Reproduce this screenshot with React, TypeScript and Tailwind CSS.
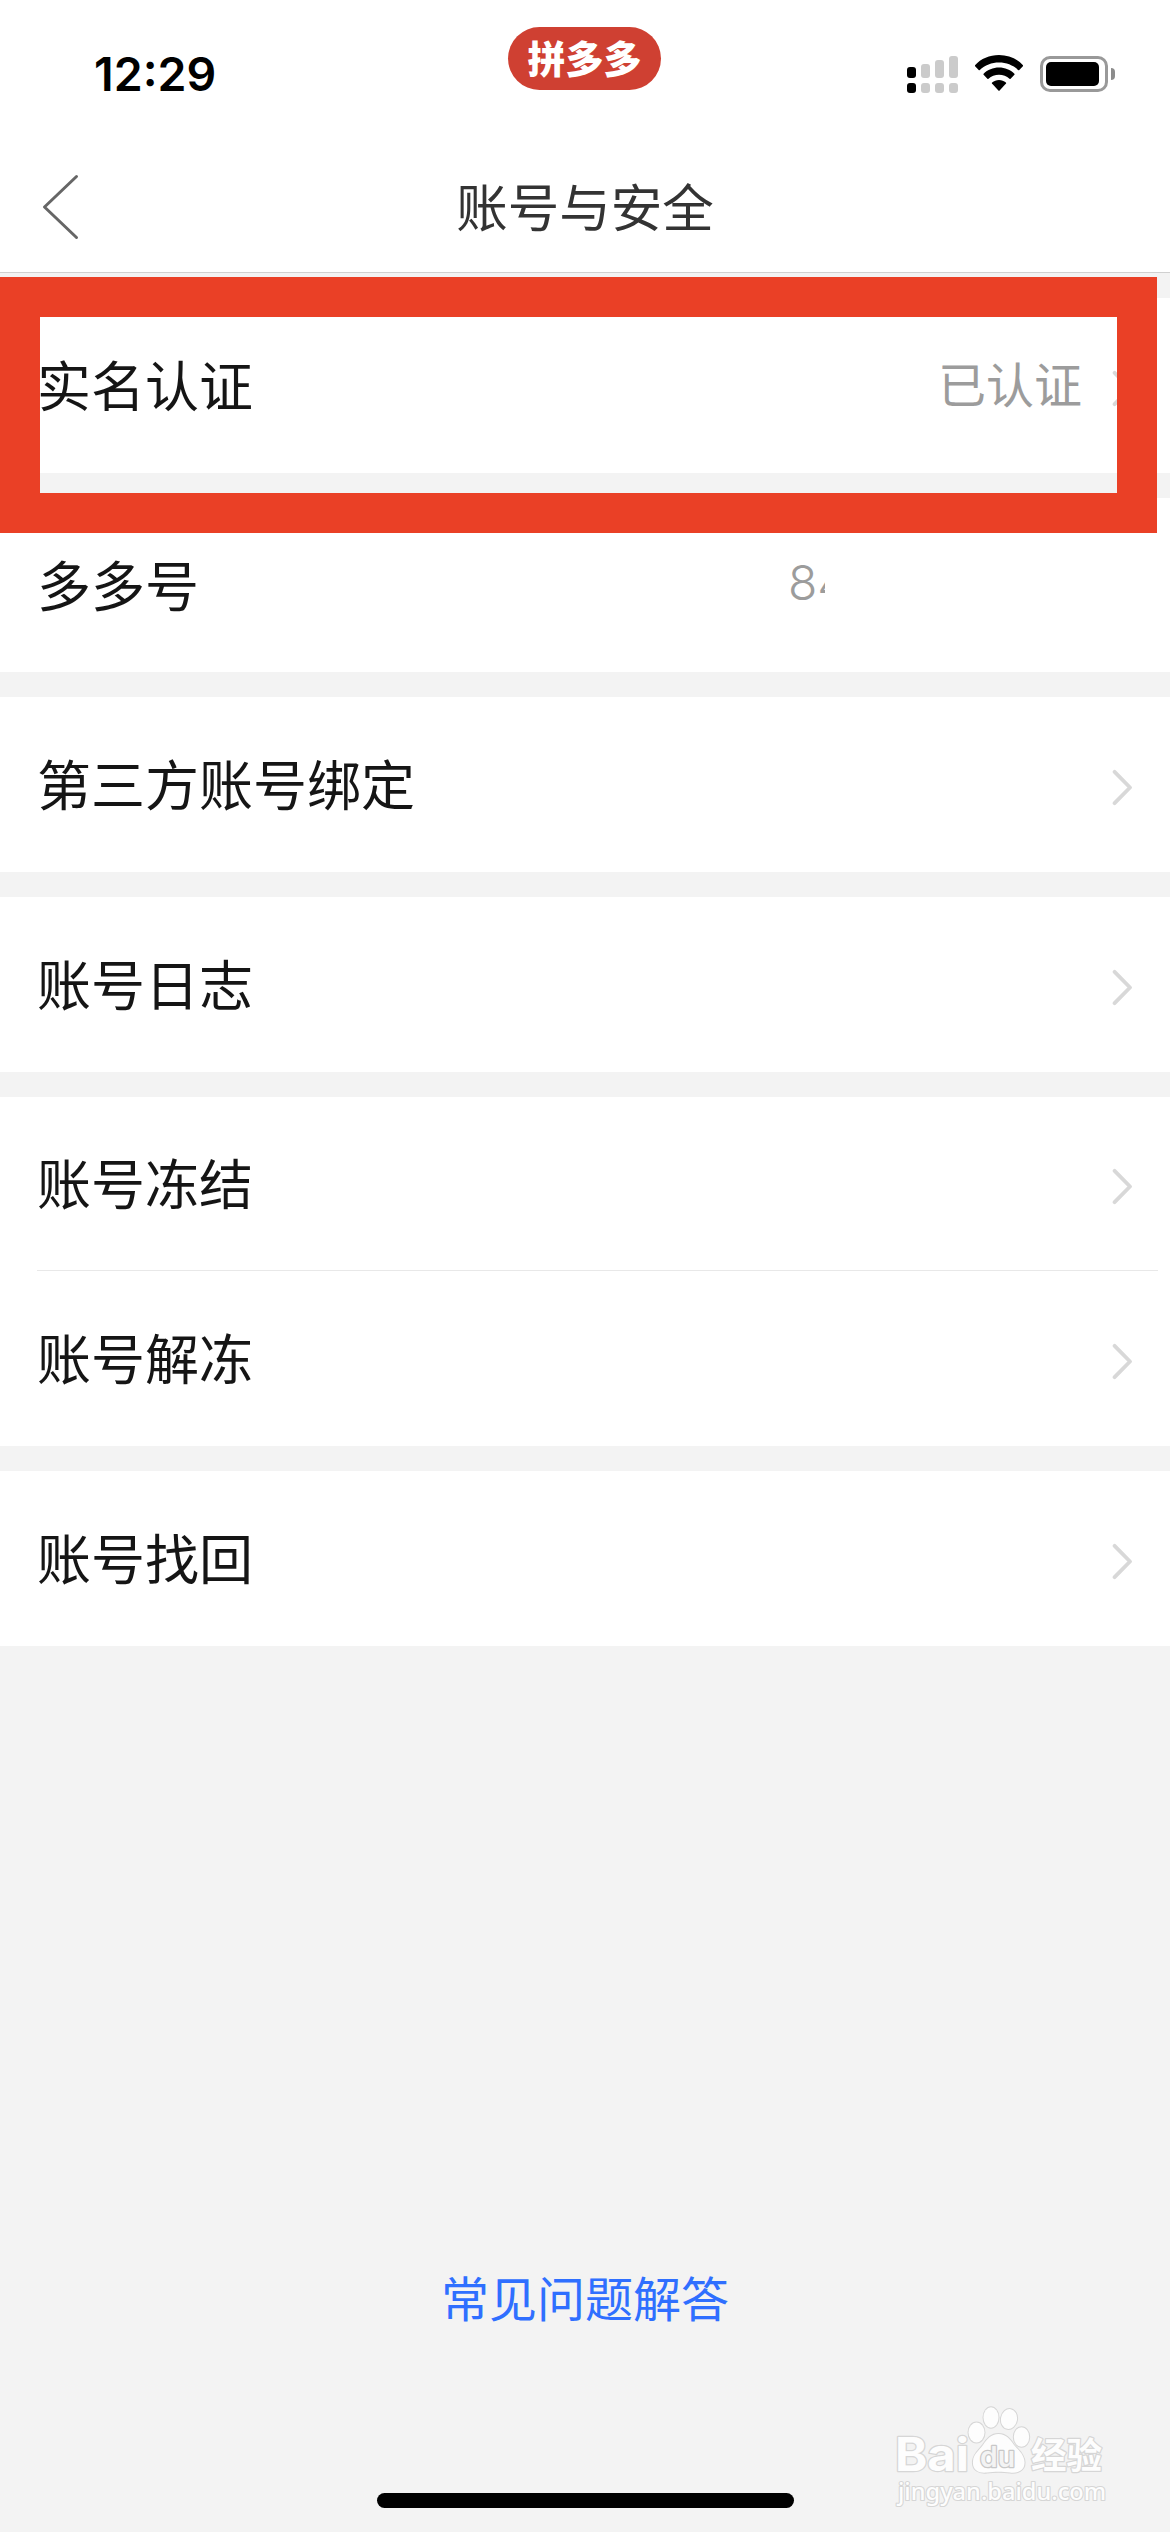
import type { ReactNode } from "react";

const CJK = "font-['Noto_Sans_CJK_SC',sans-serif]";

function Chevron() {
  return (
    <svg className="mt-[6px] h-[37px] w-[21px] shrink-0" viewBox="0 0 21 37" fill="none">
      <path d="M2.6 2.8L18 18.5L2.6 34.2" stroke="#d8d8d8" strokeWidth="3.8" strokeLinecap="round" strokeLinejoin="round" />
    </svg>
  );
}

function Row({ label, height, chevron = true, children }: { label: string; height: string; chevron?: boolean; children?: ReactNode }) {
  return (
    <div className={`flex items-center bg-white pl-[37px] pr-[37px] ${height}`}>
      <span className="flex-1 whitespace-nowrap pb-[3px] text-[54px] leading-[80px] text-[#151515]">{label}</span>
      {children}
      {chevron && <Chevron />}
    </div>
  );
}

function Signal() {
  const bars = [
    { h: "h-[11px]", c: "bg-black" },
    { h: "h-[14px]", c: "bg-[#cbcbcb]" },
    { h: "h-[18px]", c: "bg-[#cbcbcb]" },
    { h: "h-[22px]", c: "bg-[#cbcbcb]" },
  ];
  return (
    <div className="flex h-[37px] items-end gap-[5px]">
      {bars.map((b, i) => (
        <div key={i} className="flex flex-col gap-[5px]">
          <div className={`w-[9px] rounded-[3px] ${b.h} ${b.c}`} />
          <div className={`h-[10px] w-[9px] rounded-[3px] ${b.c}`} />
        </div>
      ))}
    </div>
  );
}

function Wifi() {
  return (
    <svg className="-mt-px ml-[17px] h-[36px] w-[48px]" viewBox="0 0 48 36">
      <path d="M24 0C33.500 0 42 3.700 48 10.200Q48.300 10.700 47.900 11.200L44.300 15Q43.800 15.500 43.200 15C38 10.200 31.300 7.600 24 7.600S10 10.200 4.800 15Q4.200 15.500 3.700 15L.1 11.200Q-.3 10.700 0 10.200C6 3.700 14.500 0 24 0Z" />
      <path d="M24 12.600C30 12.600 35.400 14.900 39.400 18.700Q39.900 19.300 39.400 19.800L35.600 23.700Q35.100 24.200 34.500 23.700C31.700 21.300 28 19.800 24 19.800S16.300 21.300 13.500 23.700Q12.900 24.200 12.400 23.700L8.600 19.800Q8.100 19.300 8.600 18.700C12.600 14.900 18 12.600 24 12.600Z" />
      <path d="M24 25C26.600 25 29 25.900 30.900 27.400Q31.500 28 31 28.600L24.600 35.400Q24 36 23.400 35.400L17 28.600Q16.500 28 17.100 27.400C19 25.900 21.400 25 24 25Z" />
    </svg>
  );
}

function Battery() {
  return (
    <div className="ml-[17px] flex items-center gap-[3px]">
      <div className="h-[36px] w-[68px] rounded-[10px] border-[3px] border-[#999] p-[3px]">
        <div className="h-[24px] w-[53px] rounded-[5px] bg-black" />
      </div>
      <div className="h-[12px] w-[4px] rounded-r-full bg-[#8c8c8c]" />
    </div>
  );
}

function Watermark() {
  return (
    <svg
      className="absolute bottom-0 right-[30px] h-[152px] w-[270px]"
      viewBox="0 0 270 152"
      fill="#fdfdfd"
      stroke="#d6d6d6"
      strokeWidth="2"
      strokeLinejoin="round"
      paintOrder="stroke"
    >
      <text x="25" y="91" strokeWidth="2.500" fontFamily="Inter, sans-serif" fontWeight="700" fontSize="46" textLength="74" lengthAdjust="spacingAndGlyphs">Bai</text>
      <ellipse cx="106.500" cy="52.500" rx="8" ry="10" />
      <ellipse cx="121" cy="37.500" rx="7.500" ry="10.200" />
      <ellipse cx="139" cy="39" rx="8" ry="10" transform="rotate(10 139 39)" />
      <ellipse cx="151.500" cy="57" rx="7.700" ry="9.800" />
      <path d="M128.500 54C136 54 140 59 144 65C148 70 154 74 154.500 82C155 91 147 93.500 140 92.500C133 91.500 124 91.500 117 92.500C109 93.500 102 90 103 81C103.500 74 109 70.500 113 65C117 59 121 54 128.500 54Z" />
      <text x="110" y="87" fill="#f3f3f3" stroke="#c8c8c8" strokeWidth="2.500" fontFamily="Inter, sans-serif" fontWeight="600" fontSize="28" textLength="35" lengthAdjust="spacingAndGlyphs">du</text>
      <text x="161" y="88.500" strokeWidth="2.500" fontFamily="Noto Sans CJK SC, sans-serif" fontWeight="700" fontSize="36" textLength="71" lengthAdjust="spacingAndGlyphs">经验</text>
      <text x="28" y="119.500" strokeWidth="2.200" fontFamily="Noto Sans, sans-serif" fontWeight="500" fontSize="23" textLength="208" lengthAdjust="spacingAndGlyphs">jingyan.baidu.com</text>
    </svg>
  );
}

export default function App() {
  return (
    <div className={`relative flex h-[2532px] w-[1170px] flex-col overflow-hidden bg-[#f3f3f3] ${CJK}`}>
      <header className="shrink-0 border-b border-[#d0d0d0] bg-white">
        <div className="flex h-[141px] items-start">
          <div className="ml-[94px] mt-[49px] w-[414px] font-['Inter',sans-serif] text-[46.5px] font-semibold leading-[51px] text-black">12:29</div>
          <div className="mt-[27px] flex h-[63px] w-[153px] justify-center rounded-full bg-[#cf4032] text-[38px] font-black leading-[59px] text-white">拼多多</div>
          <div className="ml-[246px] mt-[56px] flex items-start">
            <Signal />
            <Wifi />
            <Battery />
          </div>
        </div>
        <div className="grid h-[131px] grid-cols-[1fr_auto_1fr] items-center">
          <svg className="ml-[41px] h-[66px] w-[40px]" viewBox="0 0 40 66" fill="none">
            <path d="M35.500 2.500L3.500 33L35.500 63.500" stroke="#666" strokeWidth="3" strokeLinecap="round" strokeLinejoin="round" />
          </svg>
          <h1 className="pb-[4px] text-[51.5px] leading-[76px] text-[#333]">账号与安全</h1>
        </div>
      </header>

      <main className="mt-[25px] flex flex-col gap-[25px]">
        <Row label="实名认证" height="h-[175px]">
          <span className="mr-[30px] pb-[8px] text-[48px] leading-[72px] text-[#9c9c9c]">已认证</span>
        </Row>
        <Row label="多多号" height="h-[174px]" chevron={false}>
          <span className="mr-[308px] w-[37px] overflow-hidden pb-[5px] font-['Inter',sans-serif] text-[48px] font-[350] leading-[60px] text-[#9c9c9c]">84</span>
        </Row>
        <Row label="第三方账号绑定" height="h-[175px]" />
        <Row label="账号日志" height="h-[175px]" />
        <section className="bg-white">
          <Row label="账号冻结" height="h-[173px]" />
          <div className="ml-[37px] mr-[12px] h-px bg-[#e8e8e8]" />
          <Row label="账号解冻" height="h-[175px]" />
        </section>
        <Row label="账号找回" height="h-[175px]" />
      </main>

      <footer className="mt-auto flex flex-col items-center pb-[24px]">
        <a className="text-[48px] leading-[72px] text-[#2f6fff]">常见问题解答</a>
        <div className="mt-[161px] h-[15px] w-[417px] rounded-full bg-black" />
      </footer>

      <div className="absolute left-0 top-[277px] h-[256px] w-[1157px] border-[40px] border-[#ea4026]" />
      <Watermark />
    </div>
  );
}
